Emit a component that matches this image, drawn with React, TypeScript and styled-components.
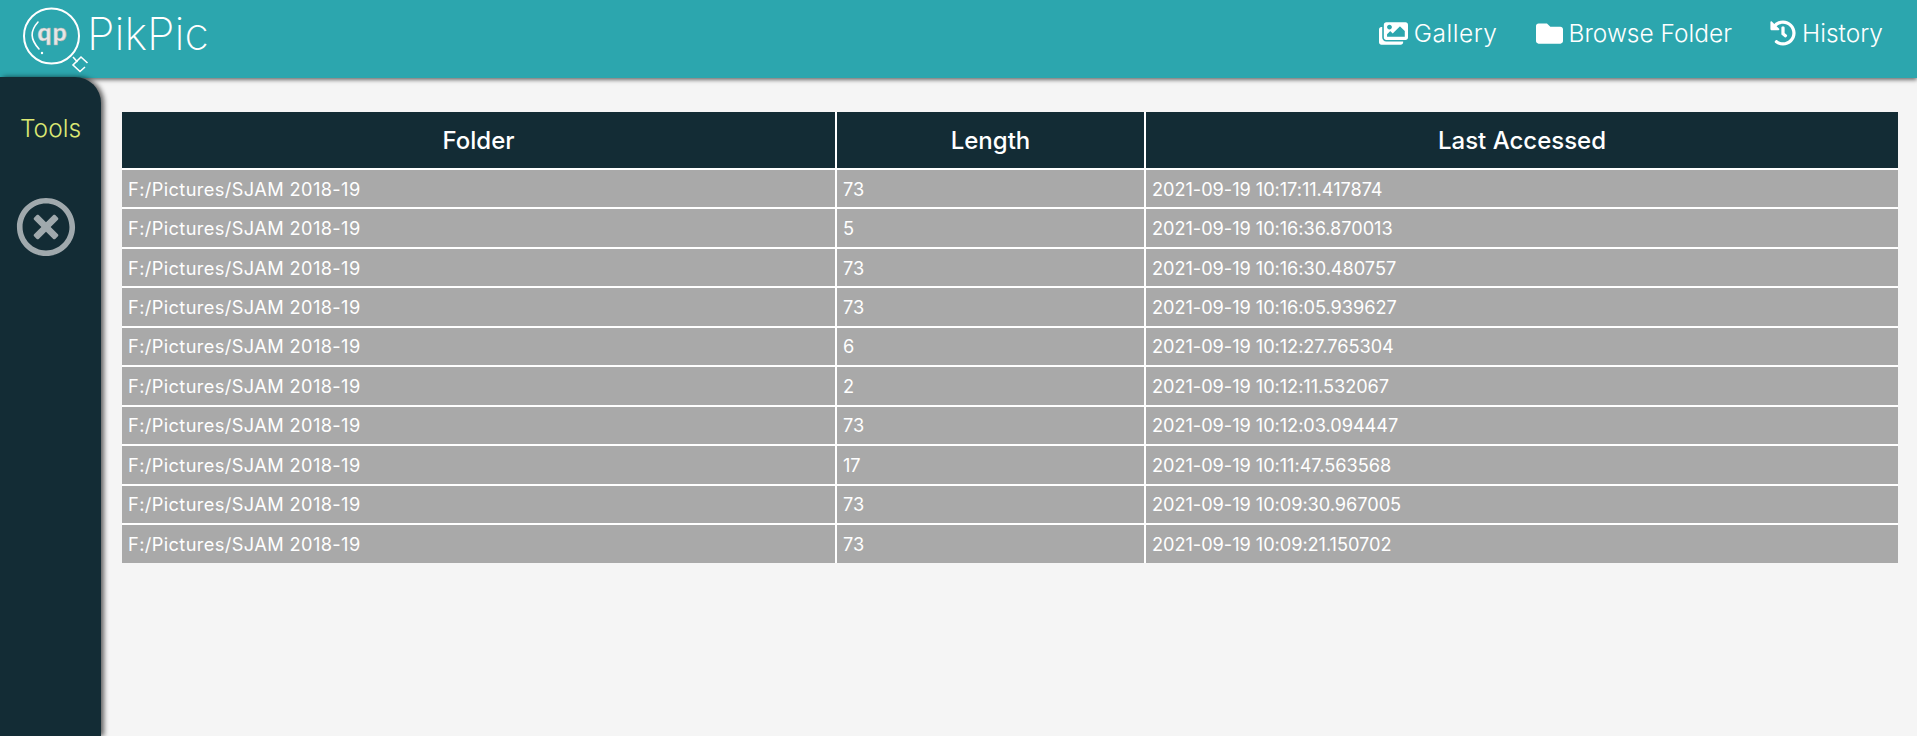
import React from "react";
import styled, { createGlobalStyle } from "styled-components";
import { FaImages, FaFolder, FaHistory, FaRegTimesCircle } from "react-icons/fa";

const Global = createGlobalStyle`
  html, body { margin: 0; padding: 0; height: 100%; overflow: hidden; background: #f5f5f5; }
  body { font-family: Inter, Lato, sans-serif; }
  #root { height: 100%; }
`;

const Page = styled.div`
  height: 736px;
  display: flex;
  flex-direction: column;
  background: #f5f5f5;
`;

const Header = styled.header`
  height: 78px;
  flex: none;
  display: flex;
  align-items: flex-start;
  justify-content: space-between;
  background: #2ca6ae;
  box-shadow: 0 2px 4px rgba(0, 0, 0, 0.55);
  position: relative;
  z-index: 2;
`;

const Brand = styled.div`
  display: flex;
  align-items: flex-start;
  padding: 6px 0 0 22px;
`;

const BrandName = styled.span`
  font-size: 44.5px;
  font-weight: 200;
  line-height: 56px;
  color: #fff;
  margin-left: -1px;
`;

const Nav = styled.nav`
  display: flex;
  gap: 38px;
  padding: 17px 34px 0 0;
`;

const NavItem = styled.a<{ $icon: number; $track?: boolean }>`
  display: flex;
  align-items: center;
  gap: 6px;
  height: 32px;
  font-size: 24.5px;
  font-weight: 300;
  letter-spacing: ${(p) => (p.$track ? "0.5px" : "0")};
  color: #fff;
  svg { font-size: ${(p) => p.$icon}px; }
`;

const Body = styled.div`
  flex: 1;
  display: flex;
  min-height: 0;
`;

const Sidebar = styled.aside`
  width: 101px;
  flex: none;
  margin-top: -1px;
  background: #132c35;
  border-top-right-radius: 26px;
  box-shadow: 3px 0 5px rgba(0, 0, 0, 0.6);
  display: flex;
  flex-direction: column;
  align-items: center;
  position: relative;
  z-index: 3;
`;

const SideTitle = styled.div`
  margin-top: 36px;
  font-size: 24.5px;
  font-weight: 300;
  line-height: 30px;
  color: #dbe873;
`;

const CloseButton = styled.div`
  margin-top: 54px;
  margin-right: 9px;
  color: #a0a9ad;
  font-size: 60px;
  line-height: 0;
`;

const Main = styled.main`
  flex: 1;
  padding: 34px 19px 0 21px;
`;

const Table = styled.table`
  width: 1776px;
  table-layout: fixed;
  border-collapse: collapse;
`;

const Th = styled.th<{ $w?: number }>`
  width: ${(p) => (p.$w ? `${p.$w}px` : "auto")};
  height: 57px;
  padding: 1px 0 0;
  box-sizing: border-box;
  background: #132c35;
  color: #fff;
  font-size: 24px;
  font-weight: 500;
  text-align: center;
  border-left: 2px solid #fff;
  border-bottom: 2px solid #fff;
  &:first-child { border-left: 0; }
`;

const Td = styled.td<{ $track?: boolean }>`
  height: 39.45px;
  padding: 0 6px;
  box-sizing: border-box;
  background: #a9a9a9;
  color: #fff;
  font-size: 18.2px;
  font-weight: 400;
  letter-spacing: ${(p) => (p.$track ? "0.4px" : "-0.05px")};
  border-left: 2px solid #fff;
  border-top: 2px solid #fff;
  &:first-child { border-left: 0; }
`;

const rows: [string, string][] = [
  ["73", "2021-09-19 10:17:11.417874"],
  ["5", "2021-09-19 10:16:36.870013"],
  ["73", "2021-09-19 10:16:30.480757"],
  ["73", "2021-09-19 10:16:05.939627"],
  ["6", "2021-09-19 10:12:27.765304"],
  ["2", "2021-09-19 10:12:11.532067"],
  ["73", "2021-09-19 10:12:03.094447"],
  ["17", "2021-09-19 10:11:47.563568"],
  ["73", "2021-09-19 10:09:30.967005"],
  ["73", "2021-09-19 10:09:21.150702"],
];

const Logo = () => (
  <svg width="66" height="66" viewBox="0 0 66 66" fill="none" style={{ overflow: "visible" }}>
    <circle cx="29.5" cy="30" r="27.5" stroke="#fff" strokeWidth="2" />
    <path d="M16 16 C 8 25 8 33 17 43" stroke="#fff" strokeWidth="1.6" strokeLinecap="round" />
    <circle cx="20" cy="47" r="1.2" fill="#fff" />
    <text x="30.5" y="35" textAnchor="middle" fontFamily="Lato, sans-serif" fontWeight="900" fontSize="25" fill="#e6e6e6" stroke="#aaa" strokeWidth="0.4" letterSpacing="1">qp</text>
    <path d="M51 51 L55.5 56 M65.5 57 L59 51 L51 59 L58 65.5 L63 61" stroke="#fff" strokeWidth="1.6" />
  </svg>
);

export default function App() {
  return (
    <Page>
      <Global />
      <Header>
        <Brand>
          <Logo />
          <BrandName>PikPic</BrandName>
        </Brand>
        <Nav>
          <NavItem $icon={29} $track><FaImages />Gallery</NavItem>
          <NavItem $icon={27}><FaFolder />Browse Folder</NavItem>
          <NavItem $icon={26}><FaHistory />History</NavItem>
        </Nav>
      </Header>
      <Body>
        <Sidebar>
          <SideTitle>Tools</SideTitle>
          <CloseButton><FaRegTimesCircle /></CloseButton>
        </Sidebar>
        <Main>
          <Table>
            <thead>
              <tr>
                <Th $w={714}>Folder</Th>
                <Th $w={309}>Length</Th>
                <Th>Last Accessed</Th>
              </tr>
            </thead>
            <tbody>
              {rows.map(([len, when]) => (
                <tr key={when}>
                  <Td $track>F:/Pictures/SJAM 2018-19</Td>
                  <Td>{len}</Td>
                  <Td>{when}</Td>
                </tr>
              ))}
            </tbody>
          </Table>
        </Main>
      </Body>
    </Page>
  );
}
